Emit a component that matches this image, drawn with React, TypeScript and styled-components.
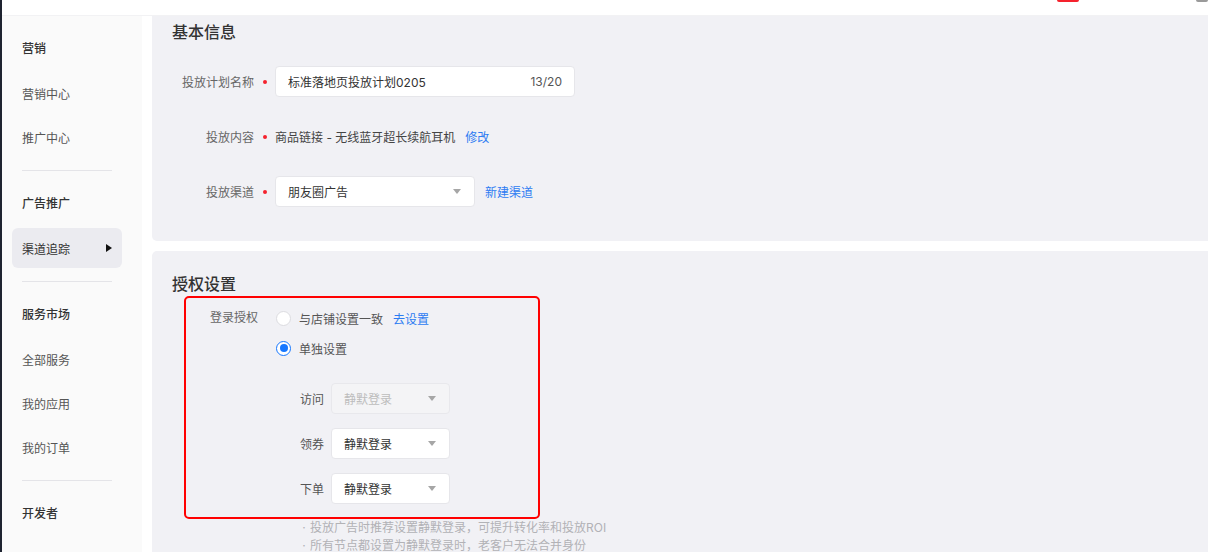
import React from "react";
import styled, { createGlobalStyle } from "styled-components";

const GlobalStyle = createGlobalStyle`
  html, body {
    margin: 0;
    padding: 0;
    background: #fff;
  }
  body {
    font-family: "Inter", "Noto Sans CJK SC", sans-serif;
    font-size: 12px;
    color: #333;
  }
  * {
    box-sizing: border-box;
  }
`;

const Shell = styled.div`
  display: flex;
  width: 1208px;
  height: 552px;
  overflow: hidden;
`;

const Edge = styled.div`
  width: 2px;
  flex-shrink: 0;
  background: #1e2330;
`;

const Frame = styled.div`
  flex: 1;
  display: flex;
  flex-direction: column;
  min-width: 0;
`;

const Header = styled.header`
  height: 16px;
  flex-shrink: 0;
  display: flex;
  justify-content: flex-end;
  align-items: flex-start;
  background: #fff;
  border-bottom: 1px solid #f2f2f4;
`;

const HeaderBit = styled.span<{ $w: number; $color: string; $gap?: number }>`
  width: ${(p) => p.$w}px;
  height: 2px;
  background: ${(p) => p.$color};
  border-radius: 0 0 3px 3px;
  margin-right: ${(p) => p.$gap ?? 0}px;
`;

const Body = styled.div`
  flex: 1;
  display: flex;
  min-height: 0;
`;

const Sidebar = styled.nav`
  width: 140px;
  flex-shrink: 0;
  background: #fafafa;
  padding-top: 11px;
  display: flex;
  flex-direction: column;
`;

const GroupTitle = styled.div`
  height: 44px;
  line-height: 44px;
  padding-left: 20px;
  font-size: 12px;
  font-weight: 500;
  color: #333;
`;

const NavItem = styled.div<{ $active?: boolean }>`
  height: 44px;
  display: flex;
  align-items: center;
  justify-content: space-between;
  padding: 0 10px;
  margin: 0 20px 0 10px;
  font-size: 12px;
  color: #555;
  ${(p) =>
    p.$active &&
    `
    height: 40px;
    margin: 2px 20px 2px 10px;
    background: #ebebf0;
    border-radius: 6px;
    color: #333;
  `}
`;

const Arrow = styled.span`
  width: 0;
  height: 0;
  border-top: 4px solid transparent;
  border-bottom: 4px solid transparent;
  border-left: 6px solid #111;
`;

const Divider = styled.div`
  height: 1px;
  background: #e4e4e8;
  margin: 11px 30px 11px 20px;
`;

const Main = styled.main`
  flex: 1;
  min-width: 0;
  padding-left: 10px;
  display: flex;
  flex-direction: column;
  gap: 10px;
`;

const Card = styled.section<{ $top?: boolean }>`
  background: #f1f1f5;
  border-radius: ${(p) => (p.$top ? "0 0 0 5px" : "5px 0 0 0")};
  padding: ${(p) => (p.$top ? "4px 20px 34px" : "21px 20px 0")};
  ${(p) => !p.$top && "flex: 1;"}
`;

const CardTitle = styled.h2`
  margin: 0;
  font-size: 16px;
  line-height: 24px;
  font-weight: 500;
  color: #333;
`;

const Form = styled.div`
  margin-top: 22px;
  display: flex;
  flex-direction: column;
  gap: 24px;
`;

const Row = styled.div`
  display: flex;
  align-items: center;
  min-height: 31px;
`;

const Label = styled.div`
  width: 82px;
  text-align: right;
  color: #666;
  white-space: nowrap;
`;

const Required = styled.span`
  width: 21px;
  display: flex;
  justify-content: center;
  &::before {
    content: "";
    width: 4px;
    height: 4px;
    border-radius: 50%;
    background: #f5222d;
  }
`;

const TextInput = styled.div`
  width: 300px;
  height: 31px;
  display: flex;
  align-items: center;
  justify-content: space-between;
  padding: 0 12px;
  background: #fff;
  border: 1px solid #e6e6ea;
  border-radius: 4px;
  color: #333;
`;

const Counter = styled.span`
  color: #555;
`;

const Value = styled.span`
  color: #444;
`;

const Link = styled.a`
  color: #2d7cf2;
  text-decoration: none;
  margin-left: 10px;
  cursor: pointer;
`;

const Select = styled.div<{ $w: number; $disabled?: boolean }>`
  width: ${(p) => p.$w}px;
  height: 31px;
  display: flex;
  align-items: center;
  justify-content: space-between;
  padding: 0 13px 0 12px;
  background: ${(p) => (p.$disabled ? "#f4f4f6" : "#fff")};
  border: 1px solid ${(p) => (p.$disabled ? "#e8e8ec" : "#e6e6ea")};
  border-radius: 4px;
  color: ${(p) => (p.$disabled ? "#bdbdbd" : "#333")};
`;

const Caret = styled.span`
  width: 0;
  height: 0;
  border-left: 4.5px solid transparent;
  border-right: 4.5px solid transparent;
  border-top: 5px solid #a6a6a6;
`;

const Highlight = styled.div`
  width: 356px;
  margin-left: 12px;
  border: 2px solid #ff0000;
  border-radius: 5px;
  padding: 9px 0 13px;
`;

const AuthRow = styled.div`
  display: flex;
  align-items: flex-start;
`;

const AuthLabel = styled.div`
  width: 72px;
  margin-right: 18px;
  height: 22px;
  line-height: 22px;
  text-align: right;
  color: #666;
`;

const Options = styled.div`
  display: flex;
  flex-direction: column;
  gap: 8px;
`;

const Option = styled.label`
  height: 22px;
  display: flex;
  align-items: center;
  gap: 8px;
  color: #555;
  & > a {
    margin-left: 2px;
  }
`;

const Radio = styled.span<{ $checked?: boolean }>`
  width: 15px;
  height: 15px;
  border-radius: 50%;
  background: #fff;
  border: 1px solid ${(p) => (p.$checked ? "#1677ff" : "#dcdce0")};
  display: flex;
  align-items: center;
  justify-content: center;
  &::after {
    content: "";
    width: 8px;
    height: 8px;
    border-radius: 50%;
    background: ${(p) => (p.$checked ? "#1677ff" : "transparent")};
  }
`;

const Steps = styled.div`
  margin-top: 24px;
  padding-left: 24px;
  display: flex;
  flex-direction: column;
  gap: 14px;
`;

const Step = styled.div`
  display: flex;
  align-items: center;
  gap: 7px;
`;

const StepLabel = styled.span`
  width: 24px;
  color: #555;
  white-space: nowrap;
`;

const Notes = styled.ul`
  list-style: none;
  margin: 0;
  padding: 0 0 0 126px;
  line-height: 18px;
  color: #b2b2b6;
`;

const Note = styled.li`
  display: flex;
  &::before {
    content: "·";
    width: 12px;
    text-align: center;
  }
`;

const sideGroups: { title: string; items: string[]; active?: string }[] = [
  { title: "营销", items: ["营销中心", "推广中心"] },
  { title: "广告推广", items: ["渠道追踪"], active: "渠道追踪" },
  { title: "服务市场", items: ["全部服务", "我的应用", "我的订单"] },
  { title: "开发者", items: [] },
];

const steps = [
  { label: "访问", disabled: true },
  { label: "领券" },
  { label: "下单" },
];

const App: React.FC = () => {
  return (
    <>
      <GlobalStyle />
      <Shell>
        <Edge />
        <Frame>
          <Header>
            <HeaderBit $w={22} $color="#f5222d" $gap={117} />
            <HeaderBit $w={12} $color="#9a9a9a" />
          </Header>
          <Body>
            <Sidebar>
              {sideGroups.map((g, i) => (
                <React.Fragment key={g.title}>
                  {i > 0 && <Divider />}
                  <GroupTitle>{g.title}</GroupTitle>
                  {g.items.map((item) => (
                    <NavItem key={item} $active={item === g.active}>
                      {item}
                      {item === g.active && <Arrow />}
                    </NavItem>
                  ))}
                </React.Fragment>
              ))}
            </Sidebar>
            <Main>
              <Card $top>
                <CardTitle>基本信息</CardTitle>
                <Form>
                  <Row>
                    <Label>投放计划名称</Label>
                    <Required />
                    <TextInput>
                      标准落地页投放计划0205
                      <Counter>13/20</Counter>
                    </TextInput>
                  </Row>
                  <Row>
                    <Label>投放内容</Label>
                    <Required />
                    <Value>商品链接 - 无线蓝牙超长续航耳机</Value>
                    <Link>修改</Link>
                  </Row>
                  <Row>
                    <Label>投放渠道</Label>
                    <Required />
                    <Select $w={200}>
                      朋友圈广告
                      <Caret />
                    </Select>
                    <Link>新建渠道</Link>
                  </Row>
                </Form>
              </Card>
              <Card>
                <CardTitle>授权设置</CardTitle>
                <Highlight>
                  <AuthRow>
                    <AuthLabel>登录授权</AuthLabel>
                    <div>
                      <Options>
                        <Option>
                          <Radio />
                          与店铺设置一致
                          <Link>去设置</Link>
                        </Option>
                        <Option>
                          <Radio $checked />
                          单独设置
                        </Option>
                      </Options>
                      <Steps>
                        {steps.map((s) => (
                          <Step key={s.label}>
                            <StepLabel>{s.label}</StepLabel>
                            <Select $w={119} $disabled={s.disabled}>
                              静默登录
                              <Caret />
                            </Select>
                          </Step>
                        ))}
                      </Steps>
                    </div>
                  </AuthRow>
                </Highlight>
                <Notes>
                  <Note>投放广告时推荐设置静默登录，可提升转化率和投放ROI</Note>
                  <Note>所有节点都设置为静默登录时，老客户无法合并身份</Note>
                </Notes>
              </Card>
            </Main>
          </Body>
        </Frame>
      </Shell>
    </>
  );
};

export default App;
